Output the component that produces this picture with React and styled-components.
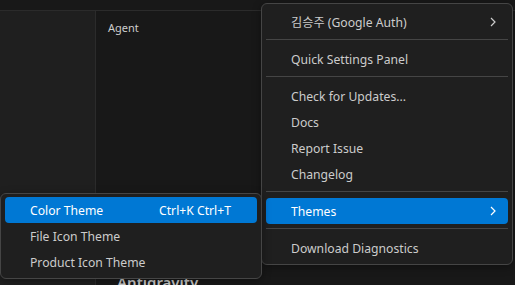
import React from "react";
import styled, { createGlobalStyle } from "styled-components";

const GlobalStyle = createGlobalStyle`
  html, body {
    margin: 0;
    padding: 0;
    background: #181818;
    overflow: hidden;
  }
  body {
    font-family: "Segoe UI", "Noto Sans", "Noto Sans CJK KR", sans-serif;
    color: #cccccc;
  }
`;

const Window = styled.div`
  position: relative;
  width: 515px;
  height: 285px;
  display: flex;
  flex-direction: column;
  background: #181818;
  overflow: hidden;
`;

const TitleBar = styled.div`
  height: 10px;
  flex-shrink: 0;
  border-bottom: 1px solid #2b2b2b;
  background: #181818;
`;

const Body = styled.div`
  flex: 1;
  display: flex;
`;

const Sidebar = styled.aside`
  width: 95px;
  flex-shrink: 0;
  background: #1f1f1f;
  border-right: 1px solid #2b2b2b;
`;

const Main = styled.main`
  flex: 1;
  display: flex;
  flex-direction: column;
  padding: 10px 0 0 12px;
`;

const PanelLabel = styled.div`
  font-size: 11px;
  line-height: 14px;
  color: #cccccc;
`;

const Heading = styled.h1`
  margin: 237px 0 0 9px;
  font-size: 15px;
  font-weight: 600;
  line-height: 20px;
  color: #cccccc;
`;

const Menu = styled.div`
  position: absolute;
  top: ${(p) => p.$top}px;
  left: ${(p) => p.$left}px;
  width: ${(p) => p.$width}px;
  box-sizing: border-box;
  padding: ${(p) => p.$pad};
  background: #1f1f1f;
  border: 1px solid #454545;
  border-radius: 6px;
  box-shadow: 0 2px 8px rgba(0, 0, 0, 0.36);
  z-index: ${(p) => p.$z};
`;

const Item = styled.div`
  height: 26px;
  display: flex;
  align-items: center;
  padding: 0 26px 0 25px;
  border-radius: 4px;
  font-size: 12.2px;
  color: ${(p) => (p.$active ? "#ffffff" : "#cccccc")};
  background: ${(p) => (p.$active ? "#0078d4" : "transparent")};
  white-space: nowrap;
`;

const Label = styled.span`
  flex: 1;
`;

const Shortcut = styled.span`
  margin-left: 20px;
`;

const Separator = styled.div`
  height: 1px;
  margin: 4px 0 6px;
  background: #454545;
`;

const Chevron = styled.svg`
  width: 6px;
  height: 10px;
  margin-right: -14px;
`;

function Arrow() {
  return (
    <Chevron viewBox="0 0 6 10">
      <path d="M1 1 L5 5 L1 9" fill="none" stroke="currentColor" strokeWidth="1.2" />
    </Chevron>
  );
}

const mainItems = [
  [{ label: "김승주 (Google Auth)", sub: true }],
  [{ label: "Quick Settings Panel" }],
  [
    { label: "Check for Updates..." },
    { label: "Docs" },
    { label: "Report Issue" },
    { label: "Changelog" },
  ],
  [{ label: "Themes", sub: true, active: true }],
  [{ label: "Download Diagnostics" }],
];

const themeItems = [
  { label: "Color Theme", shortcut: "Ctrl+K Ctrl+T", active: true },
  { label: "File Icon Theme" },
  { label: "Product Icon Theme" },
];

export default function App() {
  return (
    <>
      <GlobalStyle />
      <Window>
        <TitleBar />
        <Body>
          <Sidebar />
          <Main>
            <PanelLabel>Agent</PanelLabel>
            <Heading>Antigravity</Heading>
          </Main>
        </Body>

        <Menu $top={3} $left={261} $width={252} $pad="5px 4px 3px" $z={1}>
          {mainItems.map((group, g) => (
            <React.Fragment key={g}>
              {g > 0 && <Separator />}
              {group.map((item) => (
                <Item key={item.label} $active={item.active}>
                  <Label>{item.label}</Label>
                  {item.sub && <Arrow />}
                </Item>
              ))}
            </React.Fragment>
          ))}
        </Menu>

        <Menu $top={193} $left={0} $width={262} $pad="3px 4px" $z={2}>
          {themeItems.map((item) => (
            <Item key={item.label} $active={item.active}>
              <Label>{item.label}</Label>
              {item.shortcut && <Shortcut>{item.shortcut}</Shortcut>}
            </Item>
          ))}
        </Menu>
      </Window>
    </>
  );
}
